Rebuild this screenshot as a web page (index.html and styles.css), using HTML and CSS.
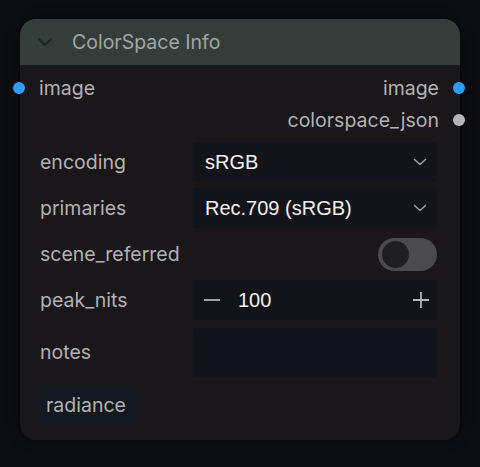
FILE: index.html
```html
<!DOCTYPE html>
<html lang="en">
<head>
    <meta charset="UTF-8">
    <meta name="viewport" content="width=device-width, initial-scale=1.0">
    <title>ColorSpace Info</title>
    <link rel="stylesheet" href="styles.css">
</head>
<body>
    <div class="node">
        <div class="node-header">
            <svg class="collapse" width="16" height="10" viewBox="0 0 16 10">
                <path d="M2 2 L8 8 L14 2" fill="none" stroke="#1c2422" stroke-width="1.8" stroke-linecap="round" stroke-linejoin="round"/>
            </svg>
            <span class="node-title">ColorSpace Info</span>
        </div>

        <div class="node-body">
            <div class="port-row">
                <span class="port-label"><span class="dot dot-in"></span>image</span>
                <span class="port-label out">image<span class="dot dot-out"></span></span>
            </div>
            <div class="port-row">
                <span></span>
                <span class="port-label out">colorspace_json<span class="dot dot-out grey"></span></span>
            </div>

            <div class="widgets">
                <span class="label">encoding</span>
                <div class="select">
                    <span>sRGB</span>
                    <svg width="14" height="8" viewBox="0 0 14 8"><path d="M1.5 1.5 L7 6.5 L12.5 1.5" fill="none" stroke="#9c9ea2" stroke-width="1.5" stroke-linecap="round" stroke-linejoin="round"/></svg>
                </div>

                <span class="label">primaries</span>
                <div class="select">
                    <span>Rec.709 (sRGB)</span>
                    <svg width="14" height="8" viewBox="0 0 14 8"><path d="M1.5 1.5 L7 6.5 L12.5 1.5" fill="none" stroke="#9c9ea2" stroke-width="1.5" stroke-linecap="round" stroke-linejoin="round"/></svg>
                </div>

                <span class="label">scene_referred</span>
                <div class="toggle-cell">
                    <div class="toggle"><div class="knob"></div></div>
                </div>

                <span class="label">peak_nits</span>
                <div class="number">
                    <svg width="20" height="20" viewBox="0 0 20 20"><path d="M2 10 H18" stroke="#b4b4b6" stroke-width="1.8"/></svg>
                    <span class="value">100</span>
                    <svg class="plus" width="20" height="20" viewBox="0 0 20 20"><path d="M2 10 H18 M10 2 V18" stroke="#b4b4b6" stroke-width="1.8"/></svg>
                </div>

                <span class="label notes-label">notes</span>
                <div class="textarea"></div>
            </div>

            <div class="chip">radiance</div>
        </div>
    </div>
</body>
</html>
```

FILE: styles.css
```css
body {
    margin: 0;
    background: #0b0d12;
    font-family: Inter, "Noto Sans", sans-serif;
}

.node {
    margin: 19px 20px;
    width: 440px;
    background: #19171a;
    border-radius: 16px;
    box-shadow: 0 0 12px rgba(0, 0, 0, 0.5);
}

.node-header {
    height: 46px;
    background: #353d3b;
    border-radius: 16px 16px 0 0;
    display: flex;
    align-items: center;
    padding-left: 17px;
}

.collapse {
    margin-right: 19px;
}

.node-title {
    font-size: 19.5px;
    color: #9ea8a5;
}

.node-body {
    padding: 7px 0 15px 0;
}

.port-row {
    height: 32px;
    display: flex;
    justify-content: space-between;
    align-items: center;
}

.port-label {
    display: flex;
    align-items: center;
    font-size: 19.5px;
    color: #b2b2b4;
}

.dot {
    width: 12px;
    height: 12px;
    border-radius: 50%;
    background: #2f9bf2;
}

.dot-in {
    margin-left: -7px;
    margin-right: 14px;
}

.dot-out {
    margin-left: 14px;
    margin-right: -5px;
}

.dot.grey {
    background: #b6b6b8;
}

.widgets {
    display: grid;
    grid-template-columns: 153px 244px;
    grid-template-rows: 40px 40px 40px 40px 51px;
    row-gap: 6px;
    padding: 6px 0 0 20px;
    align-items: center;
}

.label {
    font-size: 19.5px;
    color: #b2b2b4;
}

.select,
.number {
    height: 40px;
    background: #121419;
    border-radius: 4px;
    display: flex;
    align-items: center;
    justify-content: space-between;
    padding: 0 10px 0 12px;
    font-family: "Liberation Sans", Arial, sans-serif;
    font-size: 20px;
    color: #f2f2f2;
}

.toggle-cell {
    display: flex;
    justify-content: flex-end;
}

.toggle {
    width: 59px;
    height: 33px;
    border-radius: 17px;
    background: #4b4b4e;
    display: flex;
    align-items: center;
    padding-left: 4px;
    box-sizing: border-box;
}

.knob {
    width: 27px;
    height: 27px;
    border-radius: 50%;
    background: #1f1e21;
}

.number {
    justify-content: flex-start;
    padding: 0 6px 0 9px;
}

.number .value {
    margin-left: 16px;
}

.number .plus {
    margin-left: auto;
}

.textarea {
    height: 49px;
    background: #10131a;
    border-radius: 4px;
    align-self: start;
    margin-top: 2px;
}

.notes-label {
    align-self: start;
    margin-top: 14px;
}

.chip {
    display: inline-block;
    margin: 8px 0 0 15px;
    padding: 8px 11px;
    background: #141820;
    border-radius: 6px;
    font-size: 19.5px;
    color: #b2b2b4;
}
```
